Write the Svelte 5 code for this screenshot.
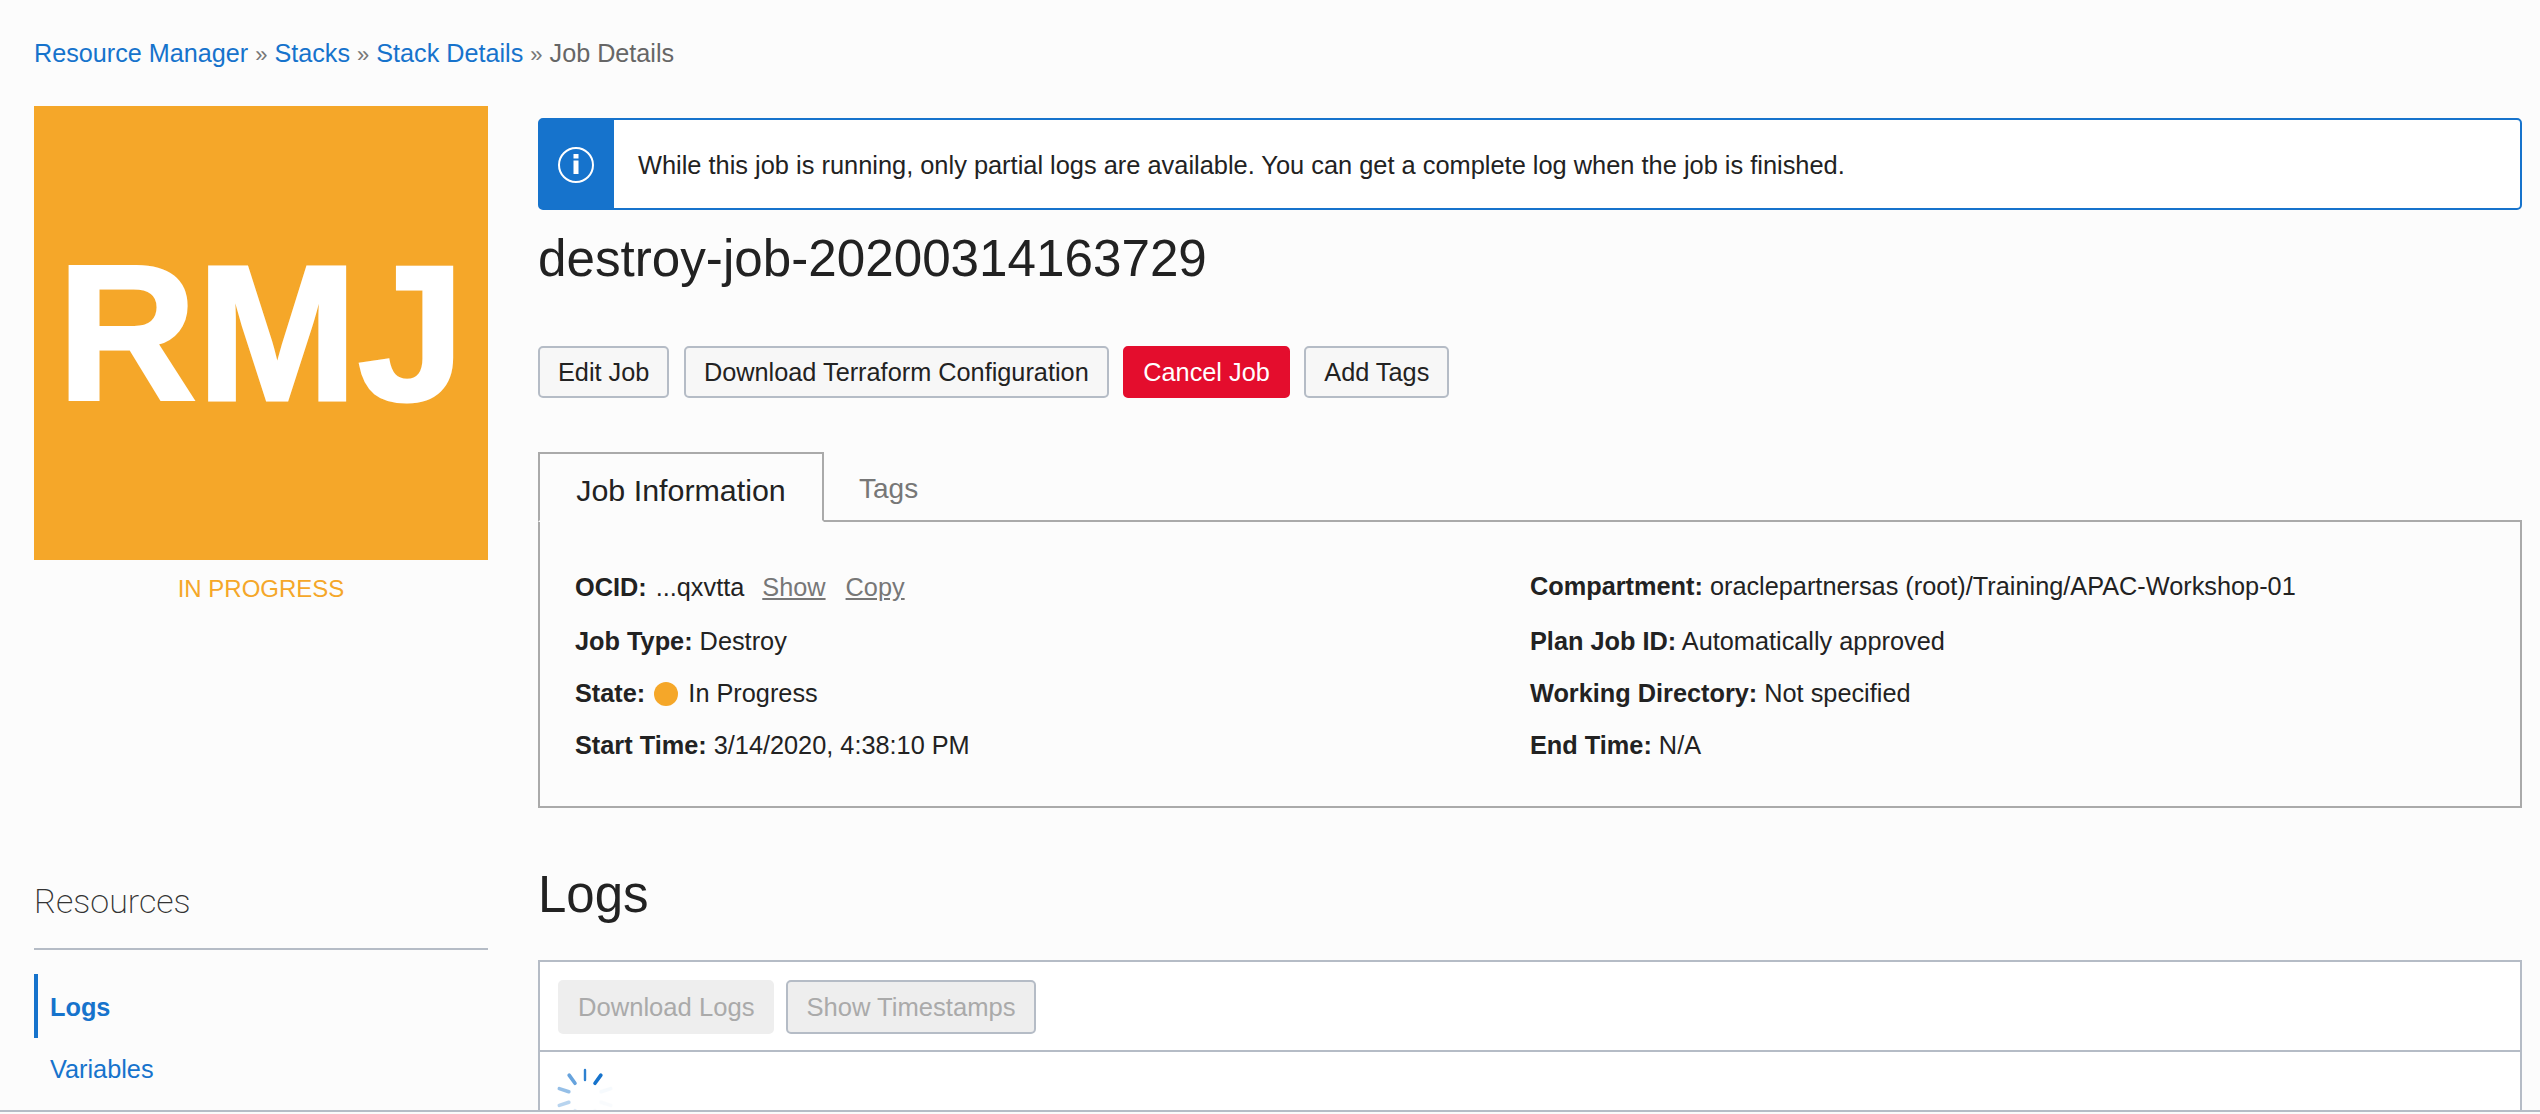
<script>
  const rowsLeft = [
    { label: 'Job Type:', value: 'Destroy' },
  ];
  const rowsRight = [
    { label: 'Compartment:', value: 'oraclepartnersas (root)/Training/APAC-Workshop-01' },
    { label: 'Plan Job ID:', value: 'Automatically approved' },
    { label: 'Working Directory:', value: 'Not specified' },
    { label: 'End Time:', value: 'N/A' },
  ];
  const ticks = [
    { a: 36, o: 1, w: 3.6 }, { a: 0, o: 0.9, w: 2.4 }, { a: -36, o: 0.65, w: 3.6 }, { a: -72, o: 0.45, w: 3.6 }, { a: -108, o: 0.3, w: 3.6 },
    { a: -144, o: 0.12, w: 3.6 }, { a: 180, o: 0.03, w: 3.6 }, { a: 144, o: 0.02, w: 3.6 }, { a: 108, o: 0.02, w: 3.6 }, { a: 72, o: 0.03, w: 3.6 },
  ];
</script>

<div class="page">
  <nav class="crumbs">
    <a href="#a">Resource Manager</a> <span class="sep">»</span>
    <a href="#b">Stacks</a> <span class="sep">»</span>
    <a href="#c">Stack Details</a> <span class="sep">»</span>
    <span class="current">Job Details</span>
  </nav>

  <div class="layout">
    <aside class="summary">
      <div class="logo">RMJ</div>
      <div class="state-label">IN PROGRESS</div>
    </aside>

    <main class="details">
      <div class="banner">
        <div class="banner-icon">
          <svg width="38" height="38" viewBox="0 0 38 38" aria-hidden="true">
            <circle cx="19" cy="19" r="17" fill="none" stroke="#fff" stroke-width="2"/>
            <rect x="16.5" y="14.5" width="5" height="13.5" fill="#fff"/>
            <rect x="16.5" y="8" width="5" height="4.5" fill="#fff"/>
          </svg>
        </div>
        <p>While this job is running, only partial logs are available. You can get a complete log when the job is finished.</p>
      </div>

      <h1>destroy-job-20200314163729</h1>

      <div class="actions">
        <button>Edit Job</button>
        <button>Download Terraform Configuration</button>
        <button class="danger">Cancel Job</button>
        <button>Add Tags</button>
      </div>

      <div class="tabs">
        <div class="tab active">Job Information</div>
        <div class="tab">Tags</div>
      </div>
      <div class="panel">
        <div class="col">
          <div class="row"><b>OCID:</b> <span class="ocid">...qxvtta</span><a class="muted" href="#s">Show</a><a class="muted" href="#k">Copy</a></div>
          {#each rowsLeft as r}
            <div class="row"><b>{r.label}</b> {r.value}</div>
          {/each}
          <div class="row"><b>State:</b> <i class="dot"></i> In Progress</div>
          <div class="row"><b>Start Time:</b> 3/14/2020, 4:38:10 PM</div>
        </div>
        <div class="col right">
          {#each rowsRight as r}
            <div class="row"><b>{r.label}</b> {r.value}</div>
          {/each}
        </div>
      </div>
    </main>

    <aside class="resources">
      <h3>Resources</h3>
      <ul>
        <li class="on"><a href="#l">Logs</a></li>
        <li><a href="#v">Variables</a></li>
      </ul>
    </aside>

    <section class="logs">
      <h2>Logs</h2>
      <div class="log-box">
        <div class="toolbar">
          <button class="off plain">Download Logs</button>
          <button class="off">Show Timestamps</button>
        </div>
        <div class="log-body">
          <svg class="spinner" width="60" height="60" viewBox="-30 -30 60 60" aria-hidden="true">
            {#each ticks as t}
              <line x1="0" y1="-17" x2="0" y2="-27" stroke="#1673cc" stroke-width={t.w} stroke-linecap="round" opacity={t.o} transform="rotate({t.a})"/>
            {/each}
          </svg>
        </div>
      </div>
    </section>
  </div>
</div>

<style>
  :global(body) {
    margin: 0;
    background: #fbfbfb;
  }
  .page {
    height: 1112px;
    overflow: hidden;
    border-bottom: 2px solid #b5bcc6;
    background: #fcfcfc;
    color: #222;
    font-family: "Liberation Sans", Arial, sans-serif;
    font-size: 26px;
    box-sizing: border-box;
    padding: 38px 18px 0 34px;
  }
  a {
    color: #1673cc;
    text-decoration: none;
  }
  .crumbs {
    height: 30px;
    line-height: 30px;
    color: #666;
    font-size: 25.2px;
  }
  .sep {
    color: #777;
    font-size: 22px;
    line-height: 1;
  }
  .current {
    color: #666;
  }
  .layout {
    display: grid;
    grid-template-columns: 454px 1984px;
    column-gap: 50px;
    margin-top: 38px;
  }
  .logo {
    width: 454px;
    height: 454px;
    background: #f5a729;
    color: #fff;
    font-weight: 700;
    font-size: 193px;
    line-height: 454px;
    text-align: center;
    -webkit-text-stroke: 3px #fff;
  }
  .state-label {
    margin-top: 14px;
    text-align: center;
    color: #f5a729;
    line-height: 30px;
    font-size: 24px;
  }
  .details {
    padding-top: 12px;
    min-width: 0;
  }
  .banner {
    display: flex;
    align-items: center;
    height: 92px;
    box-sizing: border-box;
    border: 2px solid #1673cc;
    border-radius: 5px;
    background: #fff;
  }
  .banner-icon {
    width: 72px;
    padding: 2px 2px 0 0;
    box-sizing: content-box;
    height: calc(100% - 2px);
    background: #1673cc;
    display: flex;
    align-items: center;
    justify-content: center;
  }
  .banner p {
    margin: 2px 0 0 24px;
    font-size: 25.4px;
  }
  h1 {
    margin: 19px 0 0;
    font-weight: 400;
    font-size: 51.2px;
    line-height: 60px;
  }
  .actions {
    display: flex;
    gap: 14.5px;
    margin-top: 57px;
  }
  button {
    height: 52px;
    padding: 0 18px;
    border: 2px solid #b5bcc6;
    border-radius: 5px;
    background: #f7f7f7;
    color: #222;
    font: inherit;
    font-size: 25.3px;
  }
  button.danger {
    background: #e40d2d;
    border-color: #e40d2d;
    color: #fff;
  }
  .tabs {
    display: flex;
    margin-top: 54px;
    height: 70px;
    box-sizing: border-box;
    border-bottom: 2px solid #aaa;
  }
  .tab {
    padding: 0 35px;
    height: 70px;
    box-sizing: border-box;
    line-height: 73px;
    font-size: 28px;
    color: #777;
  }
  .tab.active {
    width: 286px;
    border: 2px solid #aaa;
    border-bottom: 2px solid #fcfcfc;
    color: #222;
    font-size: 30.4px;
    line-height: 72px;
    text-align: center;
    padding: 0;
  }
  .panel {
    display: grid;
    grid-template-columns: 955px 1fr;
    height: 286px;
    box-sizing: border-box;
    border: 2px solid #aaa;
    border-top: 0;
    padding: 39px 35px 0;
  }
  .row {
    height: 52px;
    line-height: 52px;
    font-size: 25.3px;
    white-space: nowrap;
  }
  .row:first-child {
    height: 54px;
  }
  .right .row:first-child {
    line-height: 50px;
  }
  .ocid {
    margin-right: 18px;
    margin-left: 2px;
  }
  .muted {
    color: #777;
    text-decoration: underline;
    margin-right: 20px;
  }
  .dot {
    display: inline-block;
    width: 24px;
    height: 24px;
    border-radius: 50%;
    background: #f5a729;
    vertical-align: -4px;
    margin: 0 3px 0 2px;
  }
  .resources {
    margin-top: 70px;
  }
  h3 {
    margin: 0;
    padding-bottom: 24px;
    font-family: Roboto, "Liberation Sans", sans-serif;
    font-weight: 200;
    font-size: 34px;
    line-height: 46px;
    color: #333;
    border-bottom: 2px solid #b5bcc6;
  }
  ul {
    list-style: none;
    margin: 24px 0 0;
    padding: 0;
  }
  li {
    height: 62px;
    line-height: 62px;
    padding-left: 12px;
    font-size: 25.3px;
    border-left: 4px solid transparent;
  }
  li.on {
    height: 64px;
    line-height: 66px;
    border-left-color: #1673cc;
    font-weight: 700;
  }
  .logs {
    margin-top: 57px;
  }
  h2 {
    margin: 0;
    font-weight: 400;
    font-size: 51px;
    line-height: 60px;
  }
  .log-box {
    margin-top: 35px;
    border: 2px solid #b5bcc6;
    height: 300px;
    background: #fff;
  }
  .toolbar {
    display: flex;
    gap: 12px;
    height: 90px;
    box-sizing: border-box;
    border-bottom: 2px solid #b5bcc6;
    padding: 18px 18px 0;
  }
  .toolbar button {
    height: 54px;
    font-size: 25.6px;
  }
  button.off {
    background: #eee;
    color: #aaa;
  }
  button.plain {
    border-color: #eee;
  }
  .log-body {
    padding: 15px;
    line-height: 0;
  }
</style>
